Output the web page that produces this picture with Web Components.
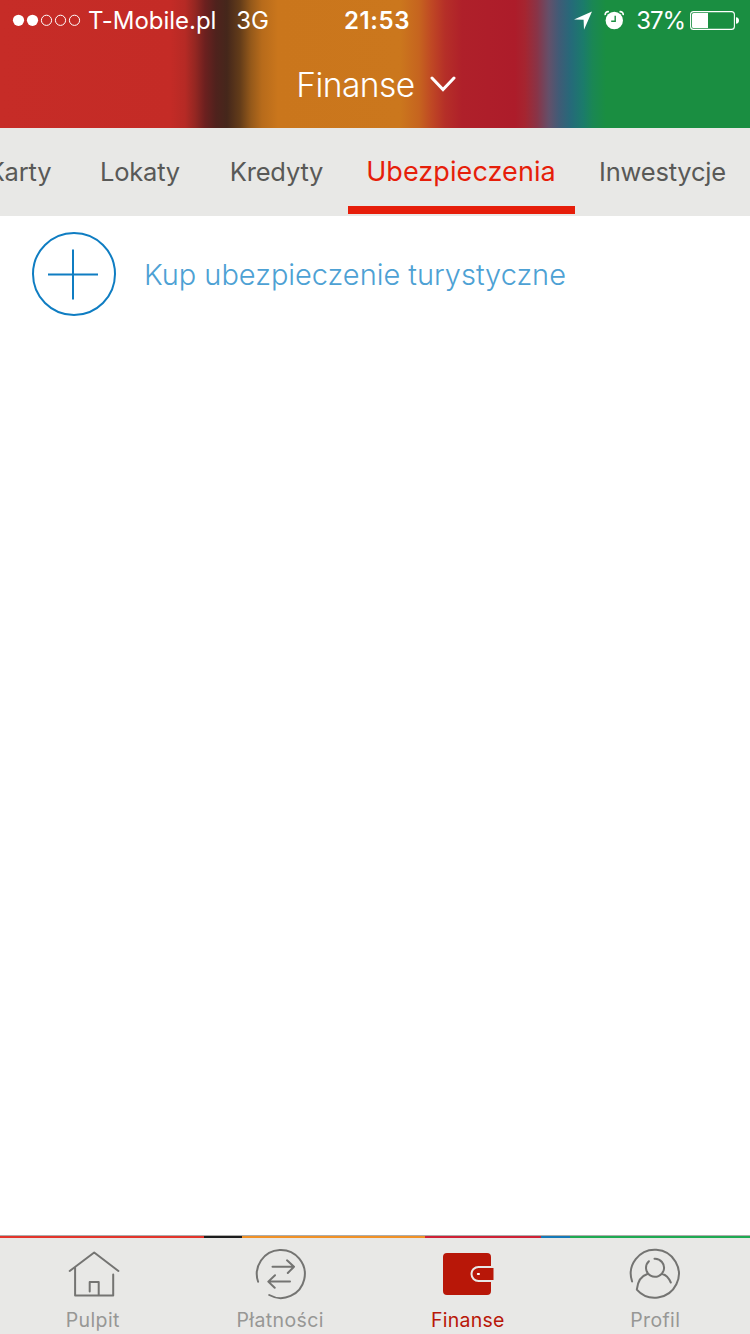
<!DOCTYPE html>
<html lang="pl">
<head>
  <meta charset="utf-8">
  <title>Finanse</title>
  <style>
    body {
      margin: 0;
      font-family: Inter, "Liberation Sans", sans-serif;
      background: #fff;
    }
  </style>
</head>
<body>
  <bank-app></bank-app>

  <script>
    const define = (name, html) => {
      const template = document.createElement('template')
      template.innerHTML = html
      customElements.define(name, class extends HTMLElement {
        constructor () {
          super()
          this.attachShadow({ mode: 'open' }).appendChild(template.content.cloneNode(true))
        }
      })
    }

    define('status-bar', /*html*/`
      <style>
        :host {
          display: grid;
          grid-template-columns: 1fr auto 1fr;
          align-items: center;
          height: 40px;
          padding: 0 10px 0 12px;
          color: #fff;
          font-size: 24px;
          line-height: 38px;
          white-space: nowrap;
        }
        .left, .right { display: flex; align-items: center; }
        .right { justify-content: flex-end; }
        svg { display: block; flex: none; }
        span { padding-top: 2px; }
        .carrier { margin-left: 7px; letter-spacing: -0.02px; }
        .network { margin-left: 20px; letter-spacing: -0.1px; }
        .time { padding-left: 2px; font-weight: 600; letter-spacing: 0.6px; }
        .alarm { margin-left: 11px; }
        .percent { margin: 0 5px 0 12px; letter-spacing: -1.1px; }
      </style>
      <div class="left">
        <svg width="69" height="12" viewBox="0 0 69 12" fill="#fff">
          <circle cx="6.5" cy="6.3" r="5.6"/>
          <circle cx="20.5" cy="6.3" r="5.6"/>
          <g fill="none" stroke="#fff">
            <circle cx="34.5" cy="6.3" r="5.1"/>
            <circle cx="48.5" cy="6.3" r="5.1"/>
            <circle cx="62.5" cy="6.3" r="5.1"/>
          </g>
        </svg>
        <span class="carrier">T-Mobile.pl</span>
        <span class="network">3G</span>
      </div>
      <span class="time">21:53</span>
      <div class="right">
        <svg width="20" height="20" viewBox="0 0 20 20">
          <path d="M19 1.5L11 19.8 10.6 9.8 1 9.4z" fill="#fff"/>
        </svg>
        <svg class="alarm" width="20" height="20" viewBox="0 0 20 20">
          <circle cx="10.3" cy="10.5" r="8.7" fill="#fff"/>
          <path d="M11.2 5.7v5.6H7.2" fill="none" stroke="#1b8e41" stroke-width="1.4"/>
          <path d="M1.2 5.2C.9 3 2.7 1.2 4.9 1.7M15.5 1.7c2.2-.5 4 1.3 3.7 3.5" fill="none" stroke="#fff" stroke-width="1.6"/>
        </svg>
        <span class="percent">37%</span>
        <svg width="50" height="20" viewBox="0 0 50 20">
          <rect x=".6" y="1.6" width="43.8" height="17.8" rx="3" fill="none" stroke="#fff" stroke-width="1.1"/>
          <path d="M3.6 3H18v15H3.6A1.6 1.6 0 0 1 2 16.4V4.6A1.6 1.6 0 0 1 3.6 3z" fill="#fff"/>
          <path d="M46 7.2c4 0 4 6.6 0 6.6z" fill="#fff"/>
        </svg>
      </div>
    `)

    define('app-header', /*html*/`
      <style>
        :host {
          display: block;
          height: 128px;
          background: linear-gradient(90deg,
            #c62c27 0, #c42b26 170px, #b62a25 185px, #952722 195px, #6c201f 205px,
            #4f221d 216px, #45271b 227px, #633c19 240px, #95591a 251px, #b76b1b 262px,
            #ca761c 278px, #cb771d 400px, #c6641f 419px, #bf4724 432px, #b52f28 445px,
            #af202a 462px, #ad1c2a 515px, #a52530 525px, #893447 537px, #63506a 549px,
            #405b76 559px, #256a79 571px, #1b7b6b 583px, #1a8753 593px, #1a8e41 606px, #1a8e41 750px);
        }
        .title {
          display: flex;
          align-items: center;
          justify-content: center;
          gap: 15.5px;
          height: 88px;
          padding-left: 2.5px;
          color: #fff;
          font-size: 33.5px;
          line-height: 86px;
          font-weight: 350;
          letter-spacing: -0.5px;
        }
        .title slot { display: block; padding-top: 2px; }
        svg { display: block; }
      </style>
      <slot name="status"></slot>
      <div class="title">
        <slot></slot>
        <svg width="26" height="18" viewBox="0 0 26 18">
          <path d="M2 3l11 11.5L24 3" fill="none" stroke="#fff" stroke-width="3" stroke-linecap="round"/>
        </svg>
      </div>
    `)

    define('tab-item', /*html*/`
      <style>
        :host {
          box-sizing: border-box;
          display: flex;
          flex: none;
          justify-content: center;
          height: 86px;
          color: #595957;
          font-size: 25.5px;
          line-height: 88px;
          letter-spacing: -0.2px;
          white-space: nowrap;
        }
        :host([active]) {
          padding-right: 1px;
          border-bottom: 8px solid #e61e0a;
          color: #e61e0a;
          font-size: 27px;
          letter-spacing: 0.08px;
        }
      </style>
      <slot></slot>
    `)

    define('tab-strip', /*html*/`
      <style>
        :host {
          display: flex;
          height: 88px;
          overflow: hidden;
          background: #e8e8e6;
        }
      </style>
      <slot></slot>
    `)

    define('add-action', /*html*/`
      <style>
        :host {
          display: flex;
          align-items: center;
          gap: 28px;
          padding: 16px 32px;
          color: #4da1d4;
          font-size: 29px;
          font-weight: 300;
          letter-spacing: -0.03px;
        }
        svg { display: block; flex: none; }
      </style>
      <svg width="84" height="84" viewBox="0 0 84 84" fill="none" stroke="#0f7dc2" stroke-width="2">
        <circle cx="42" cy="42" r="41"/>
        <path d="M41 17.5v50M16 42.5h50"/>
      </svg>
      <slot></slot>
    `)

    define('nav-item', /*html*/`
      <style>
        :host {
          display: flex;
          flex: 1 1 0;
          flex-direction: column;
          align-items: center;
          gap: 5px;
          padding-top: 9px;
          color: #979795;
          font-size: 19.5px;
          line-height: 28px;
          letter-spacing: 0.4px;
        }
        :host([active]) { color: #b81708; letter-spacing: 0.25px; }
      </style>
      <slot name="icon"></slot>
      <span><slot></slot></span>
    `)

    define('bottom-nav', /*html*/`
      <style>
        :host {
          display: flex;
          flex-direction: column;
          height: 99px;
          background: #e8e8e6;
        }
        .stripe {
          flex: none;
          height: 2px;
          border-top: 1px solid #aeaeac;
          background: linear-gradient(90deg,
            #e3342b 204px, #1c1c1c 204px 242px, #f19126 242px 425px,
            #cf2036 425px 541px, #1479b8 541px 570px, #1eaa52 570px);
        }
        .items { display: flex; flex: 1; margin: 0 1px 0 -1px; }
      </style>
      <div class="stripe"></div>
      <div class="items"><slot></slot></div>
    `)

    define('bank-app', /*html*/`
      <style>
        :host {
          display: flex;
          flex-direction: column;
          width: 750px;
          height: 1334px;
          overflow: hidden;
        }
        main { flex: 1; }
        svg {
          display: block;
          width: 54px;
          height: 54px;
          fill: none;
          stroke: #747472;
          stroke-width: 2;
          stroke-linecap: round;
          stroke-linejoin: round;
        }
        .karty { width: 111px; margin-left: -36px; }
        .lokaty { width: 130px; }
        .kredyty { width: 143px; }
        .ubezpieczenia { width: 227px; }
        .inwestycje { width: 175px; }
      </style>
      <app-header>
        <status-bar slot="status"></status-bar>
        <span>Finanse</span>
      </app-header>
      <tab-strip>
        <tab-item class="karty">Karty</tab-item>
        <tab-item class="lokaty">Lokaty</tab-item>
        <tab-item class="kredyty">Kredyty</tab-item>
        <tab-item class="ubezpieczenia" active>Ubezpieczenia</tab-item>
        <tab-item class="inwestycje">Inwestycje</tab-item>
      </tab-strip>
      <main>
        <add-action>Kup ubezpieczenie turystyczne</add-action>
      </main>
      <bottom-nav>
        <nav-item>
          <svg slot="icon" viewBox="0 0 54 54">
            <path d="M3.7 24L28.2 5.5 52.4 24M9.1 20.5V48.5H47.2V27.5M23.7 44.5V35h9v13"/>
          </svg>
          Pulpit
        </nav-item>
        <nav-item>
          <svg slot="icon" viewBox="0 0 54 54">
            <path d="M5.1 34.7A24 24 0 1 1 16.2 48M19.5 19.7H40.5M34 13.3l7 6.4-6.2 6.3M37 34.6H15.5M22 28.2l-6.7 6.4 6.4 6.2"/>
          </svg>
          Płatności
        </nav-item>
        <nav-item active>
          <svg slot="icon" viewBox="0 0 54 54">
            <path d="M6 6H46Q50 6 50 10V19H37.5a8 8 0 0 0 0 16H50V44Q50 48 46 48H6Q2 48 2 44V10Q2 6 6 6zM37.5 21H52.5V33H37.5a6 6 0 0 1 0-12z" fill="#b81708" stroke="none"/>
            <path d="M36.8 27h1.2" stroke="#fff"/>
          </svg>
          Finanse
        </nav-item>
        <nav-item>
          <svg slot="icon" viewBox="0 0 54 54">
            <path d="M4.1 34.5A24 24 0 1 1 8.8 42.6C9.6 35 12.8 29 19.4 27M20.9 14.2A9 9 0 1 0 26.5 11.8M34.3 27C38.3 28 41.2 31.8 42.8 35.5"/>
          </svg>
          Profil
        </nav-item>
      </bottom-nav>
    `)
  </script>
</body>
</html>
